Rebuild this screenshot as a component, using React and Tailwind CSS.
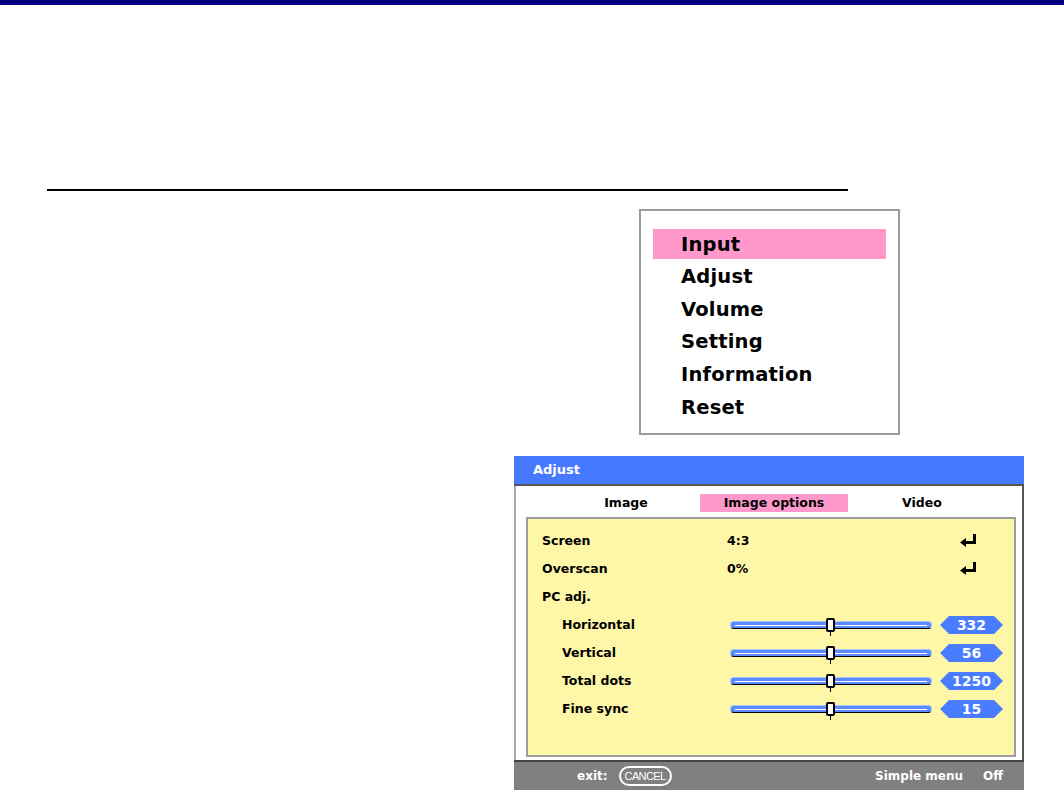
import React from "react";

const menuItems = ["Input", "Adjust", "Volume", "Setting", "Information", "Reset"];

const rows = [
  { label: "Screen", value: "4:3", enter: true },
  { label: "Overscan", value: "0%", enter: true },
  { label: "PC adj." },
];

const sliders = [
  { label: "Horizontal", value: "332" },
  { label: "Vertical", value: "56" },
  { label: "Total dots", value: "1250" },
  { label: "Fine sync", value: "15" },
];

// little "enter" arrow shown at the end of the Screen / Overscan rows
const EnterIcon = () => (
  <svg width="17" height="14" viewBox="0 0 17 14">
    <rect x="13" y="0" width="3" height="10" fill="#000" />
    <rect x="5" y="7" width="11" height="3" fill="#000" />
    <polygon points="0,8.5 6,4 6,13" fill="#000" />
  </svg>
);

const Slider = ({ value }) => (
  <div className="flex items-center">
    <div className="relative w-[202px] h-[8px]">
      <div className="h-[8px] rounded-full bg-[#5b8bff] border border-[#a4c2ff] border-b-black flex flex-col justify-center">
        <div className="h-px bg-white mx-[4px]" />
      </div>
      {/* knob */}
      <div className="absolute left-[96px] top-[-3px] w-[9px] h-[14px] bg-white border-2 border-black rounded-[2px]" />
      <div className="absolute left-[100px] top-[11px] w-px h-[4px] bg-black" />
    </div>
    <div className="ml-[8px] w-[63px] h-[18px] bg-[#4a7cff] text-white font-bold text-[14px] flex items-center justify-center [clip-path:polygon(9px_0,calc(100%-9px)_0,100%_50%,calc(100%-9px)_100%,9px_100%,0_50%)]">
      {value}
    </div>
  </div>
);

export default function App() {
  return (
    <div
      className="w-[1064px] h-[790px] bg-white overflow-hidden"
      style={{ fontFamily: '"DejaVu Sans", "Liberation Sans", sans-serif' }}
    >
      <div className="h-[5px] bg-[#000080]" />
      <div className="mt-[184px] ml-[47px] w-[801px] h-[2px] bg-black" />

      {/* main menu */}
      <div className="mt-[18px] ml-[639px] w-[261px] h-[226px] border-2 border-[#9a9a9a] pt-[17px]">
        {menuItems.map((item, i) => (
          <div key={item} className="h-[32.6px] flex items-center">
            <div
              className={
                i === 0
                  ? "ml-[12px] w-[233px] h-[30px] bg-[#ff99cc] flex items-center pl-[28px]"
                  : "ml-[12px] w-[233px] h-[30px] flex items-center pl-[28px]"
              }
            >
              <span className="text-[19.5px] font-bold text-black tracking-[0.2px]">{item}</span>
            </div>
          </div>
        ))}
      </div>

      {/* Adjust window */}
      <div className="mt-[21px] ml-[514px] w-[510px]">
        <div className="h-[28px] bg-[#4679ff] flex items-center pl-[19px]">
          <span className="text-white font-bold text-[13px]">Adjust</span>
        </div>
        <div className="h-[2px] bg-[#555]" />
        <div className="border-l-2 border-r-2 border-l-[#a8a8a8] border-r-[#555] bg-white pb-[3px]">
          <div className="h-[31px] pt-[3px] flex items-center pl-[36px] text-[12.5px] font-bold text-black">
            <div className="w-[148px] text-center">Image</div>
            <div className="w-[148px] h-[18px] bg-[#ff99cc] flex items-center justify-center">Image options</div>
            <div className="w-[148px] text-center">Video</div>
          </div>
          <div className="ml-[10px] mr-[6px] h-[240px] border-2 border-[#9c9c9c] bg-[#fff7a8] pt-[8px] pl-[14px] text-[12.5px] font-bold text-black">
            {rows.map((r) => (
              <div key={r.label} className="h-[28px] flex items-center">
                <div className="w-[185px]">{r.label}</div>
                <div className="flex-1">{r.value}</div>
                {r.enter && (
                  <div className="mr-[37px] flex items-center">
                    <EnterIcon />
                  </div>
                )}
              </div>
            ))}
            {sliders.map((s) => (
              <div key={s.label} className="h-[28px] flex items-center">
                <div className="w-[188px] pl-[20px]">{s.label}</div>
                <Slider value={s.value} />
              </div>
            ))}
          </div>
        </div>
        <div className="h-[2px] bg-[#444]" />
        <div className="h-[28px] bg-[#808080] flex items-center pl-[63px] pr-[21px] text-white font-bold text-[12px]">
          <span>exit:</span>
          <span className="ml-[11px] h-[20px] px-[4px] border-2 border-white rounded-full flex items-center text-[11px] font-normal tracking-[-0.6px] [font-family:'Liberation_Sans',sans-serif]">
            CANCEL
          </span>
          <span className="ml-auto">Simple menu</span>
          <span className="ml-[20px]">Off</span>
        </div>
      </div>
    </div>
  );
}
